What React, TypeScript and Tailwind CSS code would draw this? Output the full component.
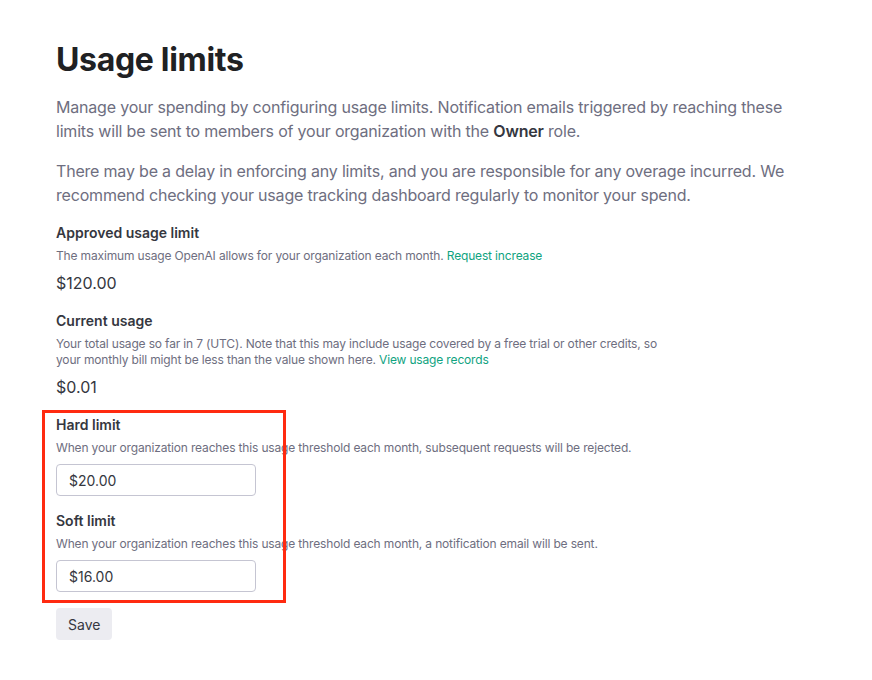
import React from "react";

export default function App() {
  return (
    <div className="relative w-[872px] h-[680px] bg-white" style={{ fontFamily: "Inter, 'Noto Sans', sans-serif" }}>
      <div className="pt-[40px] pl-[56px] text-[#353740]">
        <h1 className="text-[32px] leading-[40px] font-bold text-[#202123] tracking-[-0.01em]">Usage limits</h1>
        <p className="mt-[15px] text-[16px] leading-[24px] text-[#6e6e80] w-[760px] tracking-[-0.012em]">
          Manage your spending by configuring usage limits. Notification emails triggered by reaching these limits will be sent to members of your organization with the <span className="font-semibold text-[#353740]">Owner</span> role.
        </p>
        <p className="mt-[16px] text-[16px] leading-[24px] text-[#6e6e80] w-[760px] tracking-[-0.012em]">
          There may be a delay in enforcing any limits, and you are responsible for any overage incurred. We recommend checking your usage tracking dashboard regularly to monitor your spend.
        </p>

        <div className="mt-[16px]">
          <div className="text-[14px] leading-[20px] font-semibold text-[#353740]">Approved usage limit</div>
          <div className="mt-[5px] text-[12px] leading-[16px] text-[#6e6e80] tracking-[-0.013em]">
            The maximum usage OpenAI allows for your organization each month. <span className="text-[#10a37f]">Request increase</span>
          </div>
          <div className="mt-[7px] text-[16px] leading-[24px] text-[#353740]">$120.00</div>
        </div>

        <div className="mt-[16px]">
          <div className="text-[14px] leading-[20px] font-semibold text-[#353740]">Current usage</div>
          <div className="mt-[5px] text-[12px] leading-[16px] text-[#6e6e80] tracking-[-0.013em] whitespace-nowrap">
            Your total usage so far in 7 (UTC). Note that this may include usage covered by a free trial or other credits, so<br />your monthly bill might be less than the value shown here. <span className="text-[#10a37f]">View usage records</span>
          </div>
          <div className="mt-[7px] text-[16px] leading-[24px] text-[#353740]">$0.01</div>
        </div>

        <div className="mt-[16px]">
          <div className="text-[14px] leading-[20px] font-semibold text-[#353740]">Hard limit</div>
          <div className="mt-[5px] text-[12px] leading-[16px] text-[#6e6e80] tracking-[-0.013em]">
            When your organization reaches this usage threshold each month, subsequent requests will be rejected.
          </div>
          <div className="mt-[8px] w-[200px] h-[32px] rounded-[4px] border border-[#c5c5d2] flex items-center px-[12px] text-[14px] text-[#353740]">$20.00</div>
        </div>

        <div className="mt-[15px]">
          <div className="text-[14px] leading-[20px] font-semibold text-[#353740]">Soft limit</div>
          <div className="mt-[5px] text-[12px] leading-[16px] text-[#6e6e80] tracking-[-0.013em]">
            When your organization reaches this usage threshold each month, a notification email will be sent.
          </div>
          <div className="mt-[8px] w-[200px] h-[32px] rounded-[4px] border border-[#c5c5d2] flex items-center px-[12px] text-[14px] text-[#353740]">$16.00</div>
        </div>

        <button className="mt-[16px] h-[32px] px-[12px] rounded-[4px] bg-[#ececf1] text-[14px] text-[#353740]">Save</button>
      </div>

      <div className="absolute left-[42px] top-[410px] w-[244px] h-[193px] border-[3px] border-[#ff2a10] pointer-events-none" />
    </div>
  );
}
